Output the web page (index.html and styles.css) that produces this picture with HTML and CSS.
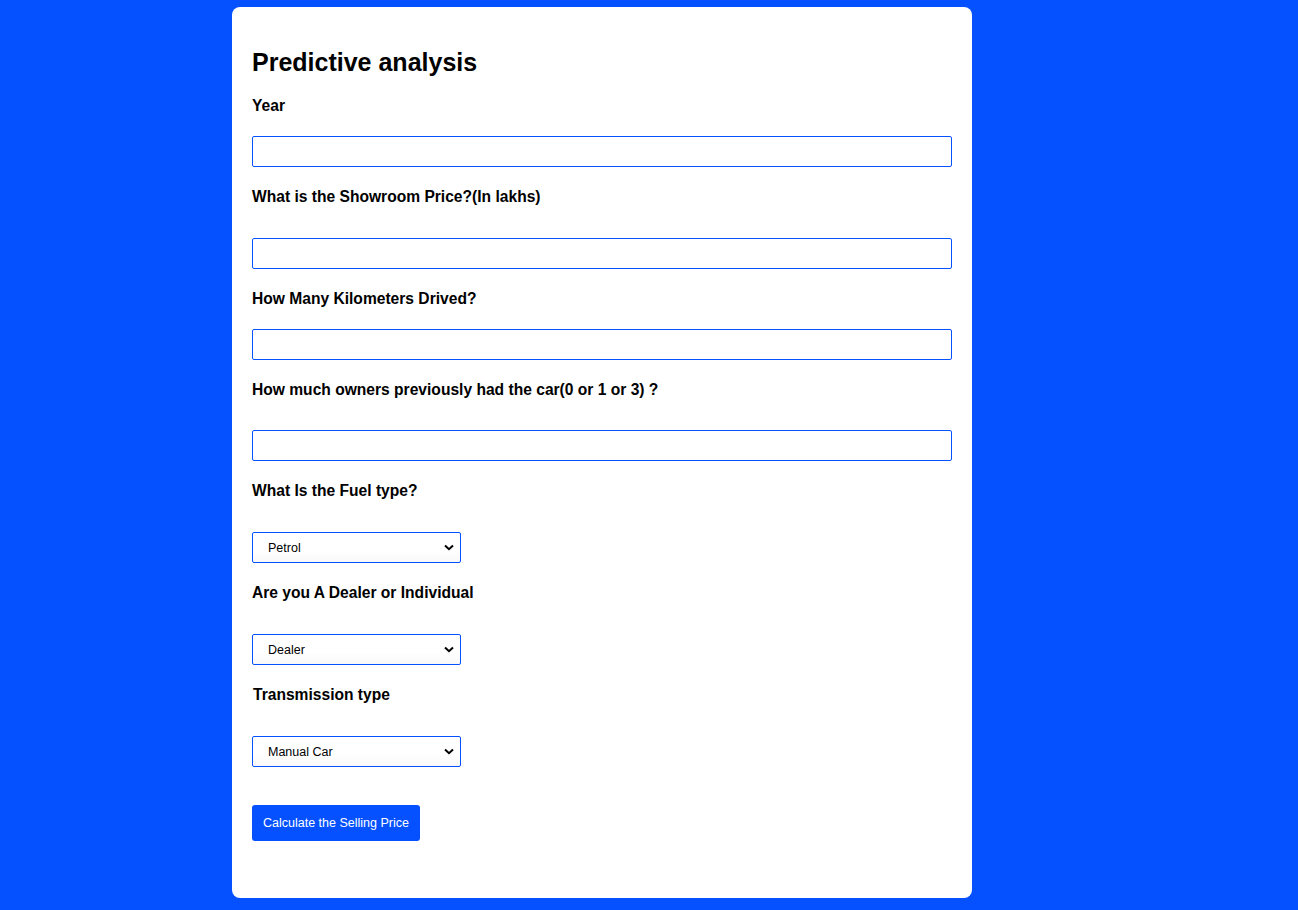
FILE: index.html
```html
<!DOCTYPE html>
<html>
<head>
<meta charset="utf-8">
<link rel="stylesheet" href="styles.css">
</head>
<body>
<div class="card">
  <h1 class="title">Predictive analysis</h1>
  <form class="form">
    <label class="lbl lbl-first">Year</label>
    <input class="txt" type="text">
    <label class="lbl lbl-long">What is the Showroom Price?(In lakhs)</label>
    <input class="txt" type="text">
    <label class="lbl">How Many Kilometers Drived?</label>
    <input class="txt" type="text">
    <label class="lbl lbl-mid">How much owners previously had the car(0 or 1 or 3) ?</label>
    <input class="txt" type="text">
    <label class="lbl lbl-long">What Is the Fuel type?</label>
    <div class="selwrap">
      <select class="sel"><option>Petrol</option><option>Diesel</option><option>CNG</option></select>
      <svg class="chev" width="10" height="7" viewBox="0 0 10 7"><path d="M1 1.5 L5 5.2 L9 1.5" fill="none" stroke="#000" stroke-width="2"/></svg>
    </div>
    <label class="lbl lbl-long">Are you A Dealer or Individual</label>
    <div class="selwrap">
      <select class="sel"><option>Dealer</option><option>Individual</option></select>
      <svg class="chev" width="10" height="7" viewBox="0 0 10 7"><path d="M1 1.5 L5 5.2 L9 1.5" fill="none" stroke="#000" stroke-width="2"/></svg>
    </div>
    <label class="lbl lbl-long lbl-indent">Transmission type</label>
    <div class="selwrap">
      <select class="sel"><option>Manual Car</option><option>Automatic Car</option></select>
      <svg class="chev" width="10" height="7" viewBox="0 0 10 7"><path d="M1 1.5 L5 5.2 L9 1.5" fill="none" stroke="#000" stroke-width="2"/></svg>
    </div>
    <button class="btn" type="button">Calculate the Selling Price</button>
  </form>
</div>
</body>
</html>
```
FILE: styles.css
```css
html, body {
  margin: 0;
  padding: 0;
}
body {
  background: #0551ff;
  font-family: "Liberation Sans", Arial, sans-serif;
  color: #000;
  height: 910px;
}
.card {
  width: 740px;
  margin: 7px 0 0 232px;
  height: 891px;
  box-sizing: border-box;
  background: #fff;
  border-radius: 8px;
  padding: 20px 20px;
}
.title {
  font-size: 25px;
  font-weight: bold;
  margin: 20px 0 0 0;
  line-height: 30px;
}
.form {
  display: flex;
  flex-direction: column;
  align-items: flex-start;
}
.lbl {
  display: block;
  font-size: 15.6px;
  font-weight: bold;
  line-height: 18px;
  margin-top: 21px;
  margin-bottom: 21px;
}
.lbl-first {
  margin-top: 20px;
}
.lbl-long {
  margin-bottom: 32px;
}
.lbl-mid {
  margin-bottom: 31px;
}
.lbl-indent {
  padding-left: 1px;
}
.txt {
  width: 700px;
  height: 31px;
  box-sizing: border-box;
  border: 1px solid #0551ff;
  border-radius: 2px;
  margin: 0;
  padding: 0 8px;
  font-family: "Liberation Sans", Arial, sans-serif;
  font-size: 13px;
  outline: none;
  background: #fff;
}
.selwrap {
  position: relative;
  width: 209px;
  height: 31px;
}
.sel {
  -webkit-appearance: none;
  appearance: none;
  width: 209px;
  height: 31px;
  box-sizing: border-box;
  border: 1px solid #0551ff;
  border-radius: 2px;
  margin: 0;
  padding: 0 0 0 15px;
  font-family: "Liberation Sans", Arial, sans-serif;
  font-size: 12.5px;
  color: #000;
  background: linear-gradient(#fff 0%, #fff 60%, #f8f8f8 100%);
  outline: none;
}
.chev {
  position: absolute;
  right: 7px;
  top: 12px;
  pointer-events: none;
}
.btn {
  margin-top: 38px;
  background: #0551ff;
  color: #fff;
  border: none;
  border-radius: 3px;
  height: 36px;
  padding: 0 11px;
  font-family: "Liberation Sans", Arial, sans-serif;
  font-size: 12.5px;
  cursor: pointer;
}
```
